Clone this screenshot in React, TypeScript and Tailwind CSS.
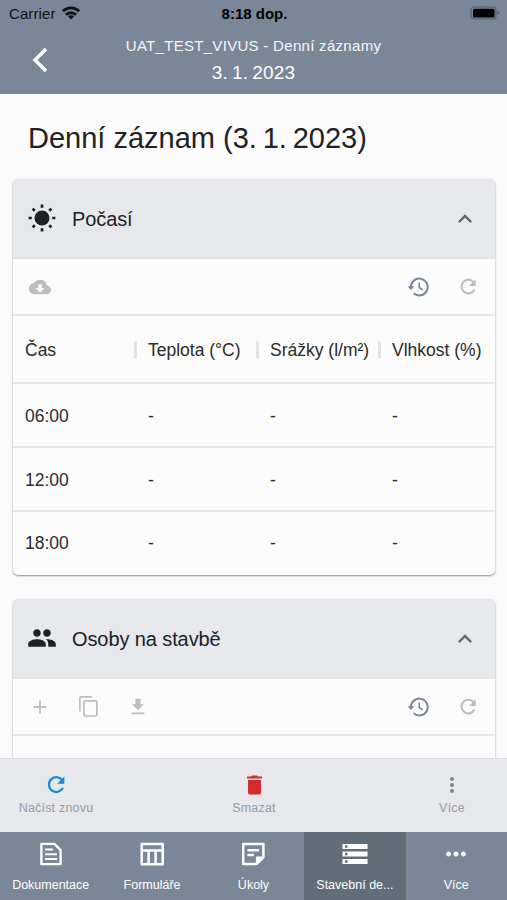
import type { ReactNode } from 'react';
import { MdAdd, MdCloudDownload, MdGroup, MdKeyboardArrowUp, MdMoreHoriz, MdMoreVert, MdStorage } from 'react-icons/md';

const SunIcon = () => (
  <svg viewBox="0 0 28 28" className="h-7 w-7 shrink-0" fill="none" stroke="currentColor" strokeWidth="2.7">
    <circle cx="14" cy="14" r="7.5" fill="currentColor" stroke="none" />
    <path d="M14 .6v3.2M14 24.2v3.2M.6 14h3.2M24.2 14h3.200M4.600 4.600l2.200 2.200M21.200 21.200l2.200 2.200M4.600 23.400l2.200-2.200M21.200 6.800l2.200-2.200" />
  </svg>
);

const RefreshIcon = ({ className }: { className: string }) => (
  <svg viewBox="0 0 24 24" className={className} fill="none" stroke="currentColor" strokeWidth="2.2">
    <path d="M18.6 7.6A7.4 7.4 0 1 0 19 14.8" />
    <path d="M20.3 3.6v7.2h-7.2z" fill="currentColor" stroke="none" />
  </svg>
);

const HistoryIcon = () => (
  <svg viewBox="0 0 22 22" className="ml-auto h-[22px] w-[22px] text-[#7a8798]" fill="none" stroke="currentColor" strokeWidth="2">
    <path d="M3.9 11a8.4 8.4 0 1 1 2.8 6.3" />
    <path d="M.5 10.3h6.8l-3.4 3.6z" fill="currentColor" stroke="none" />
    <path d="M12.2 6.6v4.9l3.6 2.4" strokeWidth="1.6" />
  </svg>
);

const CopyIcon = () => (
  <svg viewBox="0 0 19 21" className="h-[21px] w-[19px]" fill="none" stroke="currentColor" strokeWidth="1.7" strokeLinejoin="round">
    <path d="M.9 15.4V2.2Q.9.9 2.2.9h10.6" />
    <rect x="4.9" y="4.9" width="13" height="15.1" rx="1.4" />
  </svg>
);

const DownloadIcon = () => (
  <svg viewBox="0 0 24 24" className="h-[22px] w-[22px]" fill="currentColor">
    <path d="M18.5 9h-3.7V3H9.2v6H5.5l6.5 6.5zM5 18v2h14v-2H5z" />
  </svg>
);

const TrashIcon = () => (
  <svg viewBox="0 0 15 20" className="h-5 w-[15px] text-[#d32c2f]" fill="currentColor">
    <path d="M5 .5h5l.8 1H15v2H0v-2h4.2zM1 5h13v12.8q0 1.7-1.7 1.7H2.7Q1 19.5 1 17.8z" />
  </svg>
);

const DocIcon = () => (
  <svg viewBox="0 0 24 24" className="h-6 w-6" fill="none" stroke="currentColor" strokeWidth="2.4" strokeLinejoin="round">
    <path d="M2.4 1.9h13l6.2 6.2v14H2.4z" />
    <path d="M6 7.5h8M6 12.3h12M6 17h12" strokeWidth="2" />
  </svg>
);

const TableIcon = () => (
  <svg viewBox="0 0 24 24" className="h-6 w-6" fill="none" stroke="currentColor" strokeWidth="2.5" strokeLinejoin="round">
    <path d="M1.7 1.9h21v20.4h-21zM1.7 8.5h21M8.6 8.5v13.8M15.6 8.5v13.8" />
  </svg>
);

const NoteIcon = () => (
  <svg viewBox="0 0 24 24" className="h-6 w-6" fill="none" stroke="currentColor" strokeWidth="2.5" strokeLinejoin="round">
    <path d="M2.2 1.9h20.2v13.4l-6.8 6.8H2.2z" />
    <path d="M15.6 22.1v-6.8h6.8z" fill="currentColor" strokeWidth="1.4" />
    <path d="M6.4 8.3h11.6M6.4 12.9h6.4" />
  </svg>
);

const StatusBar = () => (
  <div className="flex h-7 items-center justify-between pl-[9px] pr-[7px] text-black">
    <div className="flex flex-1 items-center gap-1.5 text-[15px] tracking-[0.1px] text-[#111418]">
      Carrier
      <svg viewBox="0 0 18 14" className="-mt-0.5 h-[14px] w-[18px]" fill="none" stroke="currentColor" strokeWidth="2.9">
        <path d="M.9 5.2a11.5 11.5 0 0 1 16.2 0M3.9 8.8a7.2 7.2 0 0 1 10.2 0" />
        <path d="M9 13.6l-3-3.2a4.2 4.2 0 0 1 6 0z" fill="currentColor" stroke="none" />
      </svg>
    </div>
    <div className="text-[15px] font-bold">8:18 dop.</div>
    <div className="flex flex-1 justify-end">
      <svg viewBox="0 0 30 14" className="-mt-0.5 h-[14px] w-[30px]">
        <rect x="1" y="1" width="25" height="12" rx="3.2" fill="none" stroke="#555e6a" strokeWidth="1.2" />
        <rect x="3" y="2.8" width="21.5" height="8.6" rx="1.5" fill="#000" />
        <path d="M27.5 5v4q1.6-.6 1.6-2t-1.6-2z" fill="#555e6a" />
      </svg>
    </div>
  </div>
);

const Header = () => (
  <header className="h-[94px] shrink-0 bg-[#7a8798] text-white">
    <StatusBar />
    <div className="relative flex h-[62px] flex-col items-center">
      <svg viewBox="0 0 16 26" className="absolute left-8 top-[19px] h-[26px] w-4" fill="none" stroke="currentColor" strokeWidth="3.4">
        <path d="M14 2L3 13l11 11" />
      </svg>
      <div className="mt-2 text-[15px] leading-5 tracking-[0.3px] text-[#f4f6f9]">UAT_TEST_VIVUS - Denní záznamy</div>
      <div className="mt-[5px] text-[19px] leading-6 tracking-[0.2px]">3.&#8201;1.&#8201;2023</div>
    </div>
  </header>
);

type SectionProps = { icon: ReactNode; title: string; tools: ReactNode; children?: ReactNode };

const Section = ({ icon, title, tools, children }: SectionProps) => (
  <section className="ml-[13px] mr-3 overflow-hidden rounded-[5px] bg-[#fcfcfc] shadow-[0_1px_2px_rgba(0,0,0,0.45)]">
    <div className="flex h-20 items-center border-b border-[#e0e1e3] bg-[#e6e8eb] pl-[15px] pr-4 text-[#202124]">
      <span className="-mt-px flex w-7 justify-center">{icon}</span>
      <h2 className="ml-4 flex-1 text-[20px] tracking-[-0.1px]">{title}</h2>
      <MdKeyboardArrowUp className="h-7 w-7 text-[#66696e]" />
    </div>
    <div className="flex h-[57px] items-center border-b-2 border-[#e5e6e7] px-4 text-[#bdbdbd]">
      {tools}
      <HistoryIcon />
      <RefreshIcon className="ml-7 h-[22px] w-[22px]" />
    </div>
    {children}
  </section>
);

const columns = ['Čas', 'Teplota (°C)', 'Srážky (l/m²)', 'Vlhkost (%)'];
const hours = ['06:00', '12:00', '18:00'];

const WeatherTable = () => (
  <div className="text-[17.5px] text-[#2b2b2b]">
    <div className="grid h-[68px] grid-cols-[122px_122px_122px_1fr] items-center border-b-2 border-[#e5e6e7] pt-0.5">
      {columns.map((col, i) => (
        <div key={col} className={`relative whitespace-nowrap ${i > 0 ? 'pl-[13px]' : 'pl-3'}`}>
          {i > 0 && <span className="absolute -left-px top-1/2 h-[17px] w-[3px] -translate-y-1/2 bg-[#e2e3e4]" />}
          {col}
        </div>
      ))}
    </div>
    {hours.map((hour) => (
      <div
        key={hour}
        className="grid h-16 grid-cols-[122px_122px_122px_1fr] items-center border-b-2 border-[#e5e6e7] pt-0.5 last:h-[63px] last:border-b-0 last:pt-0"
      >
        <div className="pl-3">{hour}</div>
        <div className="pl-[13px]">-</div>
        <div className="pl-[13px]">-</div>
        <div className="pl-[13px]">-</div>
      </div>
    ))}
  </div>
);

const Action = ({ icon, label }: { icon: ReactNode; label: string }) => (
  <div className="flex w-[110px] flex-col items-center pt-[14px]">
    <span className="flex h-6 items-center">{icon}</span>
    <span className="mt-[3px] text-[12.5px] leading-4 tracking-[0.2px] text-[#969ca5]">{label}</span>
  </div>
);

const tabs = [
  { label: 'Dokumentace', icon: <DocIcon /> },
  { label: 'Formuláře', icon: <TableIcon /> },
  { label: 'Úkoly', icon: <NoteIcon /> },
  { label: 'Stavební de...', icon: <MdStorage className="h-[30px] w-[30px]" />, active: true },
  { label: 'Více', icon: <MdMoreHoriz className="h-[30px] w-[30px]" /> },
];

const App = () => (
  <div className="flex h-[900px] w-[507px] flex-col overflow-hidden bg-[#fbfbfb] font-['Liberation_Sans',Arial,sans-serif]">
    <Header />
    <main className="min-h-0 flex-1 overflow-hidden">
      <h1 className="mb-[23px] ml-7 mt-[26px] text-[29px] leading-9 text-[#222]">
        Denní záznam (3.&#8201;1.&#8201;2023)
      </h1>
      <Section icon={<SunIcon />} title="Počasí" tools={<MdCloudDownload className="h-[22px] w-[22px]" />}>
        <WeatherTable />
      </Section>
      <div className="h-6" />
      <Section
        icon={<MdGroup className="h-[30px] w-[30px] shrink-0" />}
        title="Osoby na stavbě"
        tools={
          <>
            <MdAdd className="mr-7 h-[22px] w-[22px]" />
            <CopyIcon />
            <span className="ml-[29px]">
              <DownloadIcon />
            </span>
          </>
        }
      >
        <div className="h-16" />
      </Section>
    </main>
    <div className="z-10 flex h-[74px] shrink-0 justify-between border-t border-[#dcdddf] bg-[#e6e8eb] pl-px">
      <Action icon={<RefreshIcon className="h-6 w-6 text-[#188bd2]" />} label="Načíst znovu" />
      <Action icon={<TrashIcon />} label="Smazat" />
      <Action icon={<MdMoreVert className="h-6 w-6 text-[#7a8798]" />} label="Více" />
    </div>
    <nav className="grid h-[68px] shrink-0 grid-cols-5 bg-[#7a8798] text-white">
      {tabs.map((tab) => (
        <div key={tab.label} className={`flex flex-col items-center pt-[7px] ${tab.active ? 'bg-[#626d7a]' : ''}`}>
          <span className="flex h-[30px] items-center">{tab.icon}</span>
          <span className="mt-2 whitespace-nowrap text-[12.5px] leading-4">{tab.label}</span>
        </div>
      ))}
    </nav>
  </div>
);

export default App;
